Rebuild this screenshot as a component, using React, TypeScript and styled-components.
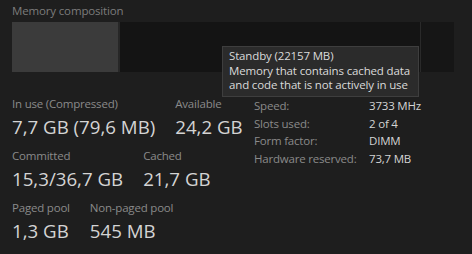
import React from 'react'
import styled, { createGlobalStyle } from 'styled-components'

const GlobalStyle = createGlobalStyle`
html, body {
margin: 0;
padding: 0;
background: #1e1e1e;
}
body {
font-family: "Open Sans", "Noto Sans", sans-serif;
}
`

const Page = styled.div`
width: 472px;
height: 254px;
box-sizing: border-box;
padding: 3px 18px 0 12px;
background: #1e1e1e;
position: relative;
overflow: hidden;
`

const Title = styled.div`
font-size: 11.5px;
letter-spacing: -0.15px;
line-height: 16px;
color: #7c7c7c;
margin-bottom: 3px;
`

const Bar = styled.div`
display: flex;
height: 50px;
background: #141414;
`

const Segment = styled.div<{ $w?: number; $bg: string }>`
flex: ${p => (p.$w ? `0 0 ${p.$w}px` : '1 1 auto')};
background: ${p => p.$bg};
`

const Stats = styled.div`
display: flex;
margin-top: 24px;
`

const LeftCol = styled.div`
width: 242px;
display: flex;
flex-direction: column;
gap: 8px;
`

const Row = styled.div`
display: flex;
gap: 20px;
`

const Stat = styled.div`
display: flex;
flex-direction: column;
`

const Label = styled.div`
font-size: 11.5px;
letter-spacing: -0.2px;
line-height: 16px;
margin-bottom: 2px;
color: #8a8a8a;
white-space: nowrap;
`

const Value = styled.div`
font-size: 18.7px;
line-height: 26px;
color: #d4d4d4;
white-space: nowrap;
`

const Details = styled.div`
display: grid;
grid-template-columns: 115px auto;
align-content: start;
padding-top: 1px;
font-size: 11.5px;
letter-spacing: -0.2px;
line-height: 17.7px;
`

const DKey = styled.div`
color: #8a8a8a;
`

const DVal = styled.div`
color: #d4d4d4;
`

const Tooltip = styled.div`
position: absolute;
left: 222px;
top: 46px;
width: 197px;
box-sizing: border-box;
padding: 2px 6px 3px 6px;
background: #2b2b2b;
border: 1px solid #3e3e3e;
color: #dadada;
font-size: 11.5px;
letter-spacing: -0.15px;
line-height: 14.5px;
white-space: nowrap;
`

const rows = [
  [
    { label: 'In use (Compressed)', value: '7,7 GB (79,6 MB)' },
    { label: 'Available', value: '24,2 GB' },
  ],
  [
    { label: 'Committed', value: '15,3/36,7 GB' },
    { label: 'Cached', value: '21,7 GB' },
  ],
  [
    { label: 'Paged pool', value: '1,3 GB' },
    { label: 'Non-paged pool', value: '545 MB' },
  ],
]

const details = [
  ['Speed:', '3733 MHz'],
  ['Slots used:', '2 of 4'],
  ['Form factor:', 'DIMM'],
  ['Hardware reserved:', '73,7 MB'],
]

export default function App() {
  return (
    <>
      <GlobalStyle />
      <Page>
        <Title>Memory composition</Title>
        <Bar>
          <Segment $w={106} $bg="#3b3b3b" />
          <Segment $w={2} $bg="#272727" />
          <Segment $bg="#141414" />
          <Segment $w={1} $bg="#2a2a2a" />
          <Segment $w={33} $bg="#161616" />
        </Bar>
        <Stats>
          <LeftCol>
            {rows.map((row, i) => (
              <Row key={i}>
                {row.map(s => (
                  <Stat key={s.label}>
                    <Label>{s.label}</Label>
                    <Value>{s.value}</Value>
                  </Stat>
                ))}
              </Row>
            ))}
          </LeftCol>
          <Details>
            {details.map(([k, v]) => (
              <React.Fragment key={k}>
                <DKey>{k}</DKey>
                <DVal>{v}</DVal>
              </React.Fragment>
            ))}
          </Details>
        </Stats>
        <Tooltip>
          Standby (22157 MB)
          <br />
          Memory that contains cached data
          <br />
          and code that is not actively in use
        </Tooltip>
      </Page>
    </>
  )
}
